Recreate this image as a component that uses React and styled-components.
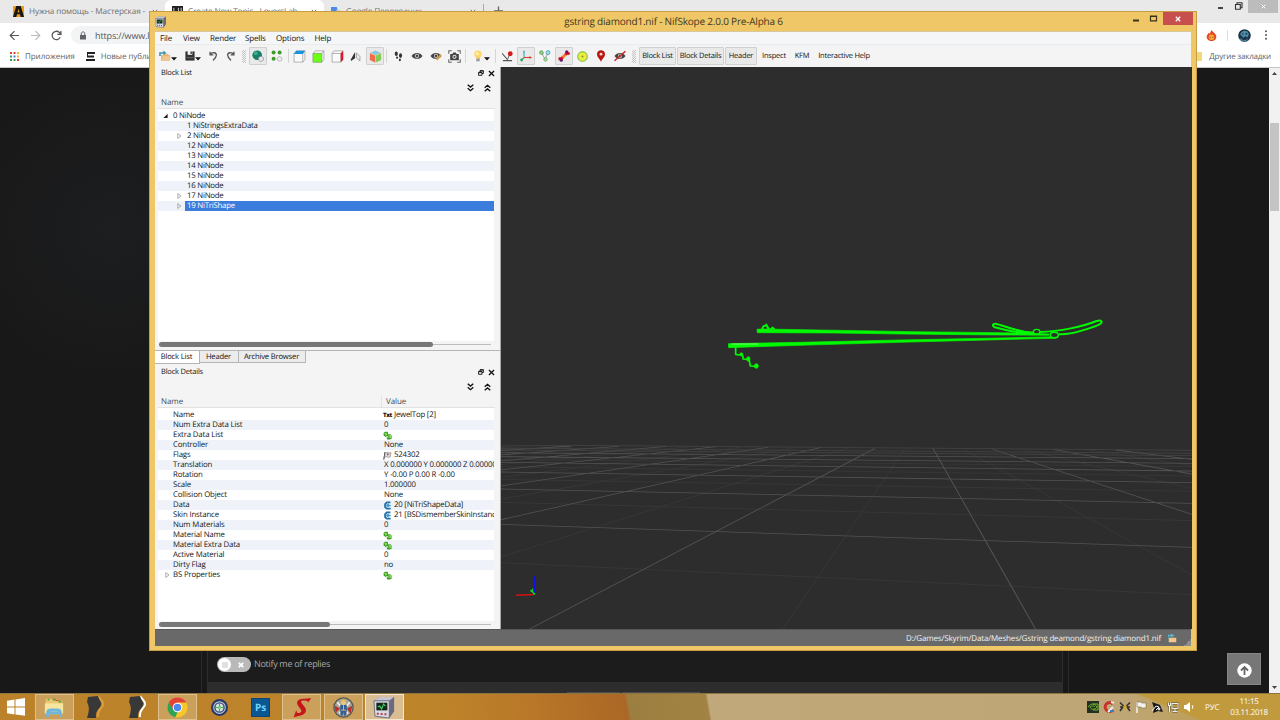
import styled, { createGlobalStyle, css } from 'styled-components';

const GlobalStyle = createGlobalStyle`
  * { box-sizing: border-box; }
  body {
    margin: 0;
    overflow: hidden;
    font-family: "Open Sans", "Noto Sans", sans-serif;
    text-rendering: geometricPrecision;
  }
  svg { display: block; flex: none; }
`;

const Screen = styled.div`
  position: relative;
  width: 1280px;
  height: 720px;
  display: flex;
  flex-direction: column;
  overflow: hidden;
  background: #181818;
`;

/* ---------- browser behind the window ---------- */

const TabStrip = styled.div`
  height: 23px;
  flex: none;
  display: flex;
  background: #e9e9e9;
`;

const BrowserTab = styled.div`
  width: ${({ $w }) => $w}px;
  height: 23px;
  display: flex;
  align-items: center;
  gap: 5px;
  padding: 0 7px 0 ${({ $pad }) => $pad || 7}px;
  font-size: 8.2px;
  letter-spacing: -0.12px;
  white-space: nowrap;
  color: #6b6d70;
  border-radius: 6px 6px 0 0;
  background: ${({ $active }) => ($active ? '#fff' : 'transparent')};
`;

const TabText = styled.span`
  flex: 1;
`;

const BrowserControls = styled.div`
  margin-left: auto;
  display: flex;
  height: 13px;
  align-items: center;
`;

const BrowserClose = styled.div`
  width: 30px;
  height: 13px;
  margin: 0 2px 0 4px;
  display: flex;
  align-items: center;
  justify-content: center;
  background: #bcbcbc;
`;

const AddressRow = styled.div`
  height: 24px;
  flex: none;
  display: flex;
  align-items: center;
  padding: 0 9px;
  background: #fff;
`;

const Nav = styled.div`
  display: flex;
  gap: 10px;
  margin-right: 9px;
`;

const AddressBar = styled.div`
  width: 1104px;
  height: 18px;
  border-radius: 9px;
  display: flex;
  align-items: center;
  gap: 8px;
  padding-left: 8px;
  background: #f1f3f4;
  color: #55585c;
  font-size: 9px;
  letter-spacing: -0.14px;
`;

const AddressTools = styled.div`
  margin-left: auto;
  display: flex;
  align-items: center;
  gap: 10px;
  background: #fff;
`;

const Divider = styled.div`
  width: 1px;
  height: 11px;
  background: #ddd;
`;

const Bookmarks = styled.div`
  height: 21px;
  flex: none;
  display: flex;
  align-items: center;
  padding: 0 9px 2px 10px;
  font-size: 8px;
  letter-spacing: -0.05px;
  color: #5f6368;
  background: #fff;
  border-bottom: 1px solid #c5c5c5;
  white-space: nowrap;
`;

const Bookmark = styled.div`
  display: flex;
  align-items: center;
  gap: 6px;
  margin-right: 11px;
  &:last-child {
    margin: 0 0 0 auto;
    letter-spacing: -0.2px;
  }
`;

const Page = styled.div`
  height: 625px;
  flex: none;
  display: flex;
  background: radial-gradient(circle at 110px 160px, #1d1e20, #181818 150px);
`;

const PageSide = styled.div`
  width: ${({ $w }) => $w}px;
  border-right: 1px solid #2a2a2a;
`;

const PageColumn = styled.div`
  width: 856px;
  margin-left: 5px;
  display: flex;
  flex-direction: column;
  justify-content: flex-end;
  background: #1c1c1c;
  border: solid #2d2d2d;
  border-width: 0 1px;
`;

const ReplyRow = styled.div`
  display: flex;
  align-items: center;
  gap: 3px;
  height: 34px;
  padding: 0 0 4px 9px;
  font-size: 9px;
  letter-spacing: -0.31px;
  color: #a9a9a9;
`;

const Toggle = styled.div`
  width: 34px;
  height: 15px;
  margin-top: 3px;
  padding: 1px;
  border-radius: 8px;
  display: flex;
  align-items: center;
  gap: 7px;
  background: #b9b9b9;
`;

const Knob = styled.div`
  width: 13px;
  height: 13px;
  border-radius: 50%;
  display: flex;
  align-items: center;
  justify-content: center;
  background: #fff;
`;

const KnobMark = styled.div`
  width: 6px;
  height: 6px;
  background: #e0e0e0;
`;

const FormFooter = styled.div`
  height: 11px;
  display: flex;
  align-items: flex-end;
  gap: 2px;
  padding-left: 359px;
  background: #2d2d2d;
`;

const FooterEdge = styled.div`
  width: ${({ $w }) => $w}px;
  height: 1px;
  background: #4c4c4c;
`;

const PageRight = styled.div`
  flex: 1;
  margin-left: 5px;
  border-left: 1px solid #2a2a2a;
  display: flex;
  align-items: flex-end;
  justify-content: flex-end;
  padding: 0 8px 8px 0;
`;

const UpButton = styled.div`
  width: 34px;
  height: 32px;
  display: flex;
  align-items: center;
  justify-content: center;
  padding-top: 3px;
  background: #777;
  border: 1px solid #858585;
`;

const PageScroll = styled.div`
  width: 11px;
  display: flex;
  flex-direction: column;
  align-items: center;
  padding: 4px 1px;
  background: #f1f1f1;
`;

const PageThumb = styled.div`
  width: 9px;
  height: 88px;
  margin: 48px 0 auto;
  background: #c4c4c4;
`;

/* ---------- NifSkope window ---------- */

const Win = styled.div`
  position: absolute;
  left: 149px;
  top: 11px;
  width: 1048px;
  height: 640px;
  padding: 0 4px 4px 5px;
  border: 1px solid #c79d44;
  background: #f0c767;
  display: flex;
  flex-direction: column;
`;

const TitleBar = styled.div`
  height: 19px;
  flex: none;
  display: flex;
  align-items: center;
`;

const Title = styled.div`
  flex: 1;
  text-align: center;
  padding: 0 0 1px 48px;
  font-size: 10px;
  letter-spacing: -0.2px;
  color: #3f3822;
`;

const WinControls = styled.div`
  height: 19px;
  display: flex;
  gap: 5px;
  margin-right: -1px;
`;

const CloseButton = styled.div`
  width: 30px;
  height: 13px;
  display: flex;
  align-items: center;
  justify-content: center;
  background: #c74f4e;
`;

const MenuBar = styled.div`
  height: 14px;
  flex: none;
  display: flex;
  align-items: center;
  margin-right: 1px;
  padding-left: 5px;
  border-top: 1px solid #d9c99a;
  border-bottom: 1px solid #ebebeb;
  background: #f5f6f7;
  font-size: 8px;
  letter-spacing: -0.15px;
  color: #111;
`;

const MenuItem = styled.div`
  width: ${({ $w }) => $w}px;
`;

const ToolBar = styled.div`
  height: 22px;
  flex: none;
  display: flex;
  align-items: center;
  margin-right: 1px;
  padding-left: 3px;
  background: #f4f4f4;
`;

const pressed = css`
  background: #e9e9e9;
  border: 1px solid #d0d0d0;
  border-radius: 1px;
`;

const Tool = styled.div`
  width: ${({ $w }) => $w}px;
  height: 18px;
  flex: none;
  margin-left: ${({ $ml }) => $ml || 0}px;
  padding-left: ${({ $pad }) => $pad || 0}px;
  display: flex;
  align-items: center;
  justify-content: ${({ $pad }) => ($pad ? 'flex-start' : 'center')};
  font-size: 7.5px;
  letter-spacing: -0.22px;
  white-space: nowrap;
  color: #111;
  ${({ $on }) => $on && pressed}
`;

const Separator = styled.div`
  width: 1px;
  height: 14px;
  background: #d5d5d5;
`;

const Grip = styled.div`
  width: 4px;
  height: 13px;
  background: repeating-conic-gradient(#c4c4c4 0 25%, #f4f4f4 0 50%) 0 0 / 2px 2px;
`;

const Work = styled.div`
  height: 562px;
  flex: none;
  display: flex;
  margin-right: 1px;
`;

const Left = styled.div`
  width: 346px;
  flex: none;
  display: flex;
  flex-direction: column;
  background: #f4f4f4;
  border-right: 1px solid #a8a8a8;
`;

const Dock = styled.section`
  height: ${({ $h }) => $h}px;
  flex: none;
  display: flex;
  flex-direction: column;
  padding: 0 5px 0 3px;
`;

const DockTitle = styled.div`
  height: 12px;
  display: flex;
  align-items: center;
  gap: 4px;
  padding-left: 3px;
  font-size: 7.5px;
  letter-spacing: -0.2px;
  color: #111;
`;

const DockName = styled.span`
  flex: 1;
`;

const DockTools = styled.div`
  height: 18px;
  display: flex;
  align-items: center;
  justify-content: flex-end;
  gap: 10px;
  padding-right: 4px;
`;

const TreeHead = styled.div`
  height: 12px;
  display: flex;
  align-items: center;
  padding-left: 3px;
  font-size: 8px;
  letter-spacing: -0.08px;
  color: #4a4a4a;
  border-bottom: 1px solid #e2e2e2;
`;

const HeadCell = styled.div`
  width: ${({ $w }) => $w || 100}px;
  height: 12px;
  line-height: 12px;
  & + & {
    padding-left: 4px;
    border-left: 1px solid #e2e2e2;
  }
`;

const Tree = styled.div`
  flex: 1;
  display: flex;
  flex-direction: column;
  margin-right: 1px;
  padding-top: 2px;
  background: #fff;
`;

const TreeRow = styled.div`
  height: 10px;
  flex: none;
  display: flex;
  font-size: 7.8px;
  line-height: 10px;
  letter-spacing: -0.15px;
  white-space: nowrap;
  color: #141414;
  &:nth-child(even) { background: #eff3f9; }
`;

const Expander = styled.div`
  width: ${({ $w }) => $w}px;
  display: flex;
  align-items: center;
  justify-content: flex-end;
  padding-right: 3px;
`;

const NodeName = styled.div`
  flex: 1;
  padding-left: 2px;
  letter-spacing: -0.22px;
  ${({ $selected }) => $selected && css`
    background: #3b7ddd;
    color: #fff;
  `}
`;

const FieldName = styled.div`
  width: 209px;
`;

const FieldValue = styled.div`
  flex: 1;
  min-width: 0;
  overflow: hidden;
  display: flex;
  align-items: center;
  gap: 2px;
  padding-left: ${({ $icon }) => ($icon ? 1 : 2)}px;
  letter-spacing: -0.2px;
`;

const TxtMark = styled.span`
  width: 9px;
  font-size: 6px;
  font-weight: 800;
  letter-spacing: -0.4px;
`;

const HScroll = styled.div`
  height: 6px;
  display: flex;
  align-items: center;
  margin: 0 4px ${({ $mb }) => $mb}px 1px;
`;

const HThumb = styled.div`
  width: ${({ $w }) => $w}px;
  height: 5px;
  border-radius: 3px;
  background: #777;
`;

const HTrack = styled.div`
  flex: 1;
  height: 1px;
  background: #bdbdbd;
`;

const Tabs = styled.div`
  height: 16px;
  flex: none;
  display: flex;
  border-top: 1px solid #b5b5b5;
`;

const DockTab = styled.div`
  width: ${({ $w }) => $w}px;
  height: ${({ $active }) => ($active ? 13 : 12)}px;
  display: flex;
  align-items: center;
  justify-content: center;
  padding-right: 1px;
  font-size: 7.6px;
  letter-spacing: -0.16px;
  color: #111;
  background: ${({ $active }) => ($active ? '#fff' : '#ececec')};
  border: solid #b5b5b5;
  border-width: 0 1px 1px 0;
`;

const Viewport = styled.div`
  flex: 1;
  background: #2d2d2d;
`;

const StatusBar = styled.div`
  flex: 1;
  display: flex;
  align-items: center;
  justify-content: flex-end;
  gap: 7px;
  margin-right: 1px;
  background: #696969;
  border-top: 1px solid #585858;
  font-size: 8px;
  letter-spacing: -0.16px;
  color: #f1f1f1;
`;

const ResizeGrip = styled.div`
  align-self: flex-end;
  width: 7px;
  height: 7px;
  background: linear-gradient(135deg, transparent 50%, #8f8f8f 50%);
`;

/* ---------- taskbar ---------- */

const TaskBar = styled.div`
  height: 27px;
  flex: none;
  display: flex;
  border-top: 1px solid #8a7444;
  background:
    linear-gradient(22deg, transparent 28px, #c09a3c 30px) right / 155px 27px no-repeat,
    linear-gradient(80deg, #bb822a 0, #bd842a 430px, #b97829 520px, #ab6726 619px, #9c7f40 622px, #a18343 699px, #c0a87a 701px, #bea676 1110px, #bd9432 1280px);
`;

const StartButton = styled.div`
  width: 34.6px;
  display: flex;
  align-items: center;
  justify-content: center;
  padding-right: 2px;
`;

const TaskItem = styled.div`
  width: 39px;
  height: 26px;
  margin-right: 2.3px;
  display: flex;
  align-items: center;
  justify-content: center;
  border: 1px solid transparent;
  ${({ $open }) => $open && css`
    background: rgba(222, 200, 160, 0.42);
    border-color: rgba(235, 215, 175, 0.6);
  `}
  ${({ $current }) => $current && css`
    background: rgba(235, 225, 210, 0.62);
    border-color: #f4e8d0;
  `}
`;

const Tray = styled.div`
  margin-left: auto;
  display: flex;
  align-items: center;
  gap: 4px;
  padding-right: 10px;
  color: #fff;
`;

const Lang = styled.div`
  width: 25px;
  padding-left: 6px;
  font-size: 8px;
  letter-spacing: -0.1px;
`;

const Clock = styled.div`
  width: 42px;
  font-size: 8px;
  letter-spacing: -0.32px;
  line-height: 11px;
  text-align: center;
`;

/* ---------- drawings ---------- */

const Svg = ({ w = 12, h, box = '0 0 12 12', children }) => (
  <svg width={w} height={h || w} viewBox={box} fill="none">{children}</svg>
);

const Cross = ({ size = 6, color = '#222', width = 1.5 }) => (
  <Svg w={size} box="0 0 6 6"><path d="M.8.8 5.2 5.2M5.2.8.8 5.2" stroke={color} strokeWidth={width} /></Svg>
);

const FolderIcon = () => (
  <Svg>
    <path d="M2 10.8V5h3l1-1.3h3.3V5H11v5.8z" fill="#e9b679" />
    <path d="M2.8 10.8 4 6.2h7.6l-.8 4.6z" fill="#f0c793" />
    <path d="M1 6V3h4" stroke="#3d94aa" strokeWidth="1.6" />
    <path d="M4.4.6 7.4 3 4.4 5.2z" fill="#3d94aa" />
  </Svg>
);

const SaveIcon = () => (
  <Svg w={10}>
    <path d="M.5.5h11v11H.5z" fill="#333" />
    <path d="M3.2 0h5.6v4.6H3.2z" fill="#f4f4f4" />
    <path d="M6.6.6h1.6v3H6.6z" fill="#333" />
    <path d="M2 8h8" stroke="#777" />
  </Svg>
);

const DropArrow = () => (
  <Svg w={6} h={10} box="0 0 6 10"><path d="M0 6.2h6L3 9.4z" fill="#111" /></Svg>
);

const UndoIcon = ({ flip }) => (
  <Svg w={10}>
    <g transform={flip ? 'translate(12 0) scale(-1 1)' : undefined}>
      <path d="M2.5 .8V4.6h4M2.8 4.2C5 1 10.2 1.4 10 5.2 9.8 8.2 7.5 9.6 5.8 11.2" stroke="#555" strokeWidth="1.6" />
    </g>
  </Svg>
);

const GlobeIcon = () => (
  <Svg>
    <circle cx="5.2" cy="5.2" r="4.8" fill="#168069" />
    <circle cx="3.8" cy="3.4" r="1.8" fill="#46ad95" />
    <path d="M9 6.2 11.4 7.5v2.8L9 11.6 6.6 10.3V7.5z" fill="#e8e8e8" stroke="#858585" strokeWidth=".6" />
  </Svg>
);

const DotsIcon = () => (
  <Svg>
    <g fill="#3f9a2c"><circle cx="2.6" cy="2.6" r="2" /><circle cx="8.6" cy="2.6" r="2" /><circle cx="2.6" cy="8.8" r="2" /></g>
    <path d="M8.6 6.5 10.8 7.7v2.4L8.6 11.3 6.4 10.1V7.7z" fill="#eee" stroke="#999" strokeWidth=".6" />
  </Svg>
);

const CubeIcon = ({ face }) => (
  <Svg w={13}>
    <path d="M1 3.2h8v8H1zM1 3.2 3 .8h8v8l-2 2.4M9 3.2 11 .8" fill="#fafafa" stroke="#8c8c8c" strokeWidth=".6" />
    {face === 'top' && <path d="M1 3.6 3 .8h8L9 3.6z" fill="#1592e0" />}
    {face === 'front' && <path d="M1 3.2h8v8H1z" fill="#6bff14" stroke="#70a84e" strokeWidth=".5" />}
    {face === 'side' && <path d="M9 3.2 11.2.8v8.1L9 11.2z" fill="#e3152d" />}
  </Svg>
);

const BookIcon = () => (
  <Svg w={11}>
    <path d="M1 9 5.5 1v7L1 11z" fill="#333" />
    <path d="M7 2 10.8 6v5L7 7.5z" fill="#eee" stroke="#888" strokeWidth=".8" />
  </Svg>
);

const ColorCube = () => (
  <Svg w={13}>
    <path d="M6 .4 11.2 2.8 6 5 .8 2.8z" fill="#84c7e8" />
    <path d="M.8 2.8 6 5v6.8L.8 9.2z" fill="#f06b50" />
    <path d="M11.2 2.8 6 5v6.8l5.2-2.6z" fill="#83cb53" />
    <path d="M.8 2.8 6 5l5.2-2.2M6 5v6.6" stroke="#f6d894" strokeWidth=".6" />
  </Svg>
);

const FeetIcon = () => (
  <Svg w={11}>
    <g fill="#333"><ellipse cx="3.6" cy="3" rx="1.7" ry="2.5" /><ellipse cx="4.4" cy="7.2" rx="1.1" ry="1.3" /><ellipse cx="8.2" cy="5" rx="1.7" ry="2.5" /><ellipse cx="7.5" cy="9.7" rx="1.1" ry="1.5" /></g>
  </Svg>
);

const EyeIcon = ({ pencil, slash }) => (
  <Svg w={12}>
    <path d="M.5 6C3 2 9 2 11.5 6 9 9.8 3 9.8.5 6z" fill="#444" />
    <circle cx="6" cy="5.9" r="2.1" fill="#c7c7c7" /><circle cx="6" cy="5.9" r="1.1" fill="#333" />
    {pencil && <path d="M6.8 10 11 4.6" stroke="#e8a33a" strokeWidth="1.8" />}
    {slash && <path d="M.6 10.8 11.4 1.2" stroke="#d02222" strokeWidth="1.5" />}
  </Svg>
);

const CameraIcon = () => (
  <Svg w={13}>
    <path d="M.7 3.5V.7h2.8M8.5.7h2.8v2.8M11.3 8.5v2.8H8.5M3.5 11.3H.7V8.5" stroke="#666" />
    <path d="M2 3.6h2L4.8 2.4h2.4L8 3.6h2v5.8H2z" fill="#444" />
    <circle cx="6" cy="6.3" r="1.9" fill="#ddd" /><circle cx="6" cy="6.3" r="1" fill="#555" />
  </Svg>
);

const BulbIcon = () => (
  <Svg w={12}>
    <circle cx="6" cy="4.2" r="3.7" fill="#ffd768" /><circle cx="5.3" cy="3.6" r="1.6" fill="#fff0b0" />
    <path d="M4 7h4v1.5H4z" fill="#f5cc5b" /><path d="M4.3 8.5h3.4v2.8H4.3z" fill="#999" />
  </Svg>
);

const PickIcon = () => (
  <Svg w={11}>
    <path d="M0 2.5 6 9.3M1 10.5h10" stroke="#555" strokeWidth="1.2" />
    <path d="M6 9.5 8 4" stroke="#555" />
    <circle cx="9" cy="3" r="2.6" fill="#d7191c" />
  </Svg>
);

const AxesIcon = () => (
  <Svg w={12}>
    <path d="M4 7V1.5" stroke="#35a9ce" strokeWidth="1.1" /><path d="M4 7.5h6.5" stroke="#db3c2d" strokeWidth="1.1" />
    <path d="M4 7.5 1.5 10.3" stroke="#32a95c" strokeWidth="1.3" />
    <path d="M2.8 2.2 4 .2l1.2 2z" fill="#35a9ce" /><path d="M9.5 6 12 7.5 9.5 9z" fill="#db3c2d" /><circle cx="1.6" cy="10" r="1.4" fill="#32a95c" />
  </Svg>
);

const NodesIcon = () => (
  <Svg w={12}>
    <path d="M2.5 3 6 9l3-6M2.5 3l2 1" stroke="#888" strokeWidth=".8" />
    <circle cx="2.4" cy="2.6" r="1.8" fill="#9bd58b" stroke="#4b9a42" strokeWidth=".8" />
    <circle cx="9" cy="2.6" r="2" fill="#a8dcef" stroke="#3b99b9" strokeWidth=".8" />
    <circle cx="6.5" cy="9.4" r="1.7" fill="#b2dfad" stroke="#5ba45a" strokeWidth=".8" />
  </Svg>
);

const BoneIcon = () => (
  <Svg w={12}>
    <path d="M3 9 9 3" stroke="#f27a2a" strokeWidth="2.6" />
    <path d="M3 9 4.6 7.4M7.6 4.4 9 3" stroke="#d31234" strokeWidth="2.8" />
    <g fill="#d31234"><circle cx="2" cy="8.7" r="1.7" /><circle cx="10.2" cy="3.4" r="1.7" /></g>
    <g fill="#6b0f6c"><circle cx="3.3" cy="10.2" r="1.5" /><circle cx="8.7" cy="1.8" r="1.5" /></g>
  </Svg>
);

const TargetIcon = () => (
  <Svg w={11}>
    <circle cx="6" cy="6" r="5.2" fill="#f0ec3e" stroke="#8fce4c" strokeWidth="1.4" /><circle cx="6" cy="6" r="1.1" fill="#7b9b27" />
  </Svg>
);

const PinIcon = () => (
  <Svg w={12}>
    <path d="M6 12C5 8.8 2 7.4 2 4.3 2 1.8 3.8.3 6 .3s4 1.5 4 4C10 7.4 7 8.8 6 12z" fill="#bb1710" /><circle cx="6" cy="4.2" r="1.4" fill="#f2dada" />
  </Svg>
);

const FloatIcon = () => (
  <Svg w={6} box="0 0 6 6"><path d="M2 2V.7h3.4v2.8H4M.6 2.4H4v2.9H.6zM.6 2.7H4M2 1h3.4" stroke="#111" strokeWidth=".9" /></Svg>
);

const Chevrons = ({ up }) => (
  <Svg w={7} h={8} box="0 0 7 8">
    <g transform={up ? 'translate(0 8) scale(1 -1)' : undefined} stroke="#111" strokeWidth="1.4">
      <path d="M.7.8 3.5 3 6.3.8M.7 4.3 3.5 6.7 6.3 4.3" />
    </g>
  </Svg>
);

const ArrowMark = ({ open }) => (
  <Svg w={5} h={6} box="0 0 5 6">
    {open ? <path d="M4.6.8v4.1H.4z" fill="#222" /> : <path d="M.8.6 4 3 .8 5.4z" stroke="#999" strokeWidth=".8" />}
  </Svg>
);

const ArrayIcon = () => (
  <Svg w={9} h={9} box="0 0 9 9">
    <path d="M.6 2 2 .8h2.6l.4 1V5H3.4v1.4L.6 4.6z" fill="#3f9e24" />
    <path d="M4.6 3.2h2.8l1.2 1.2v3.4L6.8 8.4H4.2l-.6-2h1z" fill="#3f9e24" />
    <path d="M1.4 2.4h2.2v1.8M5.6 4.2h1.8V7" stroke="#8be463" strokeWidth="1" />
    <path d="M2.2 3.4h.8v.8h-.8zM5.6 5.6h.9v1h-.9z" fill="#fff" />
  </Svg>
);

const LinkIcon = () => (
  <Svg w={9} box="0 0 8 8">
    <path d="M6.6 1.2H3.4L1.9 2.8v2.6l1.5 1.4H6.8" stroke="#2372a7" strokeWidth="1.7" />
    <path d="M3.4 4h3.4M5 2.5 3.4 4 5 5.3" stroke="#3f98d2" strokeWidth="1.2" />
  </Svg>
);

const FlagIcon = () => (
  <Svg w={9} h={9} box="0 0 9 8">
    <path d="M.8 8 2 .6" stroke="#222" /><path d="M2 1.4 4.5.8 6 1.5l2-.4-.8 4.4-2 .3-1.4-.6-2.2.5z" fill="#ddd" stroke="#777" strokeWidth=".6" />
    <path d="M4 2h1.5v1.7H4z" fill="#b53a35" />
  </Svg>
);

const AppIcon = ({ size }) => (
  <Svg w={size} box="0 0 24 24">
    <path d="M1 5 7 1h15v15l-5 7-14-1z" fill="#8d8da2" /><path d="M1 5 7 1h15l-5 4z" fill="#c4c4d2" />
    <path d="M1 5h16v18L2 21z" fill="#dadae2" stroke="#5d5d6c" strokeWidth=".8" />
    <path d="M17 5 22 1v15l-5 7z" fill="#6a6a80" /><path d="M3.5 7H15v8H3.5z" fill="#132816" />
    <path d="m5 11.5 2-1 2 3 2-5 2 2" stroke="#48c76a" strokeWidth="1.2" /><path d="M4 18.5h2M8 18.8h2M12 19h2" stroke="#b53b47" strokeWidth="2" />
  </Svg>
);

const SceneDrawing = () => (
  <svg width="691" height="562" viewBox="501 67 691 562" fill="none">
    {/* floor grid, major lines over minor ones */}
    <g transform="translate(500 420) scale(.4464 .3333)">
      <path
        stroke="#383838"
        strokeWidth="2.2"
        d="M0 428 1550 524M0 247 1550 302M0 178 1550 214M0 140 1550 168M0 118 1550 140M905 90 633 628M1038 88 1550 465M780 84 0 412M660 83 0 238M1170 88 1550 205M1310 88 1550 137M540 82 0 172M428 80 0 134"
      />
      <path
        stroke="#535353"
        strokeWidth="2.4"
        d="M0 313 1550 382M0 207 1550 250M0 156 1550 188M0 127 1550 153M0 110 1550 130M0 98 1550 116M840 85 65 628M970 85 1200 628M720 82 0 300M1102 87 1550 283M600 82 0 198M1238 88 1550 162M485 80 0 150M1380 90 1550 118M373 79 0 123M265 79 0 105M160 78 0 92"
      />
      <path stroke="#454545" strokeWidth="2" d="M0 90 1550 107M0 84 1550 100M0 78 160 76 1550 91M0 87 160 84" />
    </g>
    {/* selected mesh, seen from the side */}
    <g transform="translate(700 300) scale(.3333)" stroke="#00fa00" strokeWidth="6" strokeLinejoin="round">
      <path d="M171 88 190 87 640 95 980 99 1048 102 1046 106 900 105 600 102 400 99 172 98z" fill="#00fa00" strokeWidth="2" />
      <path d="M85 131 300 127 600 120 900 114 1068 110 1075 112 1066 115 900 119 600 127 300 136 86 143z" fill="#00fa00" strokeWidth="2" />
      <path d="M95 132h80" stroke="#78ff70" strokeWidth="3" />
      <path d="M186 88 190 79 198 76l5 5 3 7M212 88l6-5 5 5M199 76v-5" strokeWidth="6" />
      <path d="M107 142v21l9 2 7-2 6 6v8l15 1 4 4 3 16 16 1" strokeWidth="5" />
      <ellipse cx="124" cy="163" rx="4" ry="5" fill="#00fa00" strokeWidth="2" />
      <ellipse cx="145" cy="177" rx="5" ry="7" fill="#00fa00" strokeWidth="2" />
      <ellipse cx="169" cy="198" rx="6" ry="7" fill="#00fa00" strokeWidth="2" />
      <path d="M1002 99C960 100 915 91 885 82c-10-4-7-11 1-11 9 0 30 12 88 24l28 3" />
      <path d="M1020 96C1080 95 1150 79 1190 63c9-2 16-2 15 4-1 8-30 15-50 22-30 10-50 15-78 14" />
      <ellipse cx="1010" cy="95" rx="10" ry="7" fill="#2d2d2d" strokeWidth="4" />
      <ellipse cx="1063" cy="105" rx="12" ry="8" fill="#2d2d2d" strokeWidth="4.5" />
    </g>
    {/* axis gizmo */}
    <path d="M534.7 576.5v17" stroke="#1010e8" strokeWidth="1.8" />
    <path d="M516 595.2 534 594.5" stroke="#d31212" strokeWidth="1.6" />
    <path d="M535 594.5 530.8 590" stroke="#14d818" strokeWidth="1.5" />
    <path d="M530 591h2.6v-2.6" stroke="#14d818" />
  </svg>
);

const FigureIcon = ({ edge }) => (
  <Svg w={24} box="0 0 24 24">
    <path d="M15 1c3 5 6 5 5 9-1 3-6 5-5 12" stroke={edge} strokeWidth="2" />
    <path d="M5 2 15 1c2 6 4 6 3 9-1 4-6 5-5 13H4C7 14 6 11 4 7z" fill="#383839" />
  </Svg>
);

const ChromeIcon = () => (
  <Svg w={21} box="0 0 24 24">
    <circle cx="12" cy="12" r="11.5" fill="#f8c628" />
    <path d="M2 6.3A11.5 11.5 0 0 1 22 6.3H12L7 15z" fill="#df4437" />
    <path d="M2 6.3 7.5 15 12 17.5 9.5 23.2A11.5 11.5 0 0 1 2 6.3z" fill="#30a256" />
    <circle cx="12" cy="12" r="5.5" fill="#fff" /><circle cx="12" cy="12" r="4.3" fill="#4b89ed" />
  </Svg>
);

const ExplorerIcon = () => (
  <Svg w={22} box="0 0 24 24">
    <path d="M3 3h6l2 2h10v15H3z" fill="#e9ca72" /><path d="M2 8h20v11H2z" fill="#f7e49d" />
    <path d="M5 4h2M11 4h3M17 6h3" stroke="#5ea33a" strokeWidth="2" /><path d="M14 5h3" stroke="#d04533" />
    <path d="M5 23v-5c0-3 2-3 4-3h6c3 0 4 1 4 3v5M5 18.5h14" stroke="#6eb7dc" strokeWidth="3" />
  </Svg>
);

const CompassIcon = () => (
  <Svg w={17} box="0 0 24 24">
    <circle cx="12" cy="12" r="10.5" fill="#c2cbd4" stroke="#28366d" strokeWidth="3" />
    <circle cx="12" cy="12" r="6.5" fill="#dce4de" stroke="#394c81" strokeWidth="2" />
    <path d="M12 5v14M5 12h14" stroke="#44a35a" strokeWidth="1.6" /><circle cx="12" cy="12" r="2.5" fill="#72d281" />
  </Svg>
);

const PsTile = styled.div`
  width: 19px;
  height: 19px;
  display: flex;
  align-items: center;
  justify-content: center;
  border: 1px solid #0e4573;
  background: #0b5794;
  color: #6ed5fa;
  font-size: 10px;
  font-weight: 700;
`;

const SwordIcon = () => (
  <Svg w={21} box="0 0 24 24">
    <path d="M23 1 20 6c-1-2-4-2-6-2-3 0-3 2-1 4l3 4c3 5-1 8-5 9l-8 2 3-8 1 3c1 1 5 0 5-2s-6-7-5-10c1-4 6-4 9-4z" fill="#c5171b" />
  </Svg>
);

const BadgeIcon = () => (
  <Svg w={21} box="0 0 24 24">
    <circle cx="12" cy="12" r="11" fill="#a8a493" stroke="#555a59" strokeWidth="1.5" />
    <path d="m2 10 6 3-5 5zM22 10l-6 3 4 6z" fill="#b92d2a" />
    <path d="M5 6 8 10M19 6l-3 4M7 19l2-3M17 19l-2-3" stroke="#eee" strokeWidth="2" />
    <path d="M8.5 9h7l.5 6-1.5 6h-2L12 17l-1 4H9l-1-6z" fill="#335d96" />
    <circle cx="12" cy="6" r="3" fill="#eac482" /><path d="M9.4 5c0-3 5-3 5.2 0z" fill="#e5bd3f" />
    <path d="M12 9v6M9 15h6" stroke="#e8c453" />
  </Svg>
);

/* ---------- data ---------- */

const MENU = [['File', 23], ['View', 27], ['Render', 35], ['Spells', 31], ['Options', 38.5], ['Help', 30]];

const BLOCKS = [
  { name: '1 NiStringsExtraData' },
  { name: '2 NiNode', child: true },
  { name: '12 NiNode' },
  { name: '13 NiNode' },
  { name: '14 NiNode' },
  { name: '15 NiNode' },
  { name: '16 NiNode' },
  { name: '17 NiNode', child: true },
  { name: '19 NiTriShape', child: true, selected: true },
];

const DETAILS = [
  ['Name', 'JewelTop [2]', <TxtMark>Txt</TxtMark>],
  ['Num Extra Data List', '0'],
  ['Extra Data List', '', <ArrayIcon />],
  ['Controller', 'None'],
  ['Flags', '524302', <FlagIcon />],
  ['Translation', 'X 0.000000 Y 0.000000 Z 0.000000'],
  ['Rotation', 'Y -0.00 P 0.00 R -0.00'],
  ['Scale', '1.000000'],
  ['Collision Object', 'None'],
  ['Data', '20 [NiTriShapeData]', <LinkIcon />],
  ['Skin Instance', '21 [BSDismemberSkinInstance]', <LinkIcon />],
  ['Num Materials', '0'],
  ['Material Name', '', <ArrayIcon />],
  ['Material Extra Data', '', <ArrayIcon />],
  ['Active Material', '0'],
  ['Dirty Flag', 'no'],
  ['BS Properties', '', <ArrayIcon />],
];

/* ---------- parts ---------- */

const Browser = () => (
  <>
    <TabStrip>
      <BrowserTab $w={165} $pad={13}>
        <Svg w={11}><path d="M0 0h12v12H0z" fill="#ee9d18" /><path d="M3.5 0h5L12 12H8.4L6 3 3.6 12H0z" fill="#171717" /><path d="M3 7h6v2H3z" fill="#171717" /></Svg>
        <TabText>Нужна помощь - Мастерская -</TabText>
        <Cross color="#777" width={1} />
      </BrowserTab>
      <BrowserTab $w={159} $active>
        <Svg w={11}><path d="M0 0h12v12H0z" fill="#222" /><path d="M2 2v5h3M7 2v5h3V2" stroke="#ddd" /></Svg>
        <TabText>Create New Topic - LoversLab</TabText>
        <Cross color="#777" width={1} />
      </BrowserTab>
      <BrowserTab $w={159}>
        <Svg w={10}><path d="M0 0h7l2 9H0z" fill="#4d8bea" /><path d="M6 4h6v8H7z" fill="#c9ccd0" /></Svg>
        <TabText>Google Переводчик</TabText>
        <Cross color="#777" width={1} />
      </BrowserTab>
      <Svg w={26} h={23} box="0 0 26 23"><path d="M.5 4v15" stroke="#aaa" /><path d="M11 11h9M15.5 6.5v9" stroke="#666" strokeWidth="1.3" /></Svg>
      <BrowserControls>
        <Svg w={27} h={13} box="0 0 27 13"><path d="M1 8h5" stroke="#333" strokeWidth="1.8" /><path d="M18.5 4.5h4.8v4.8h-4.8zM20 4V2.7h5v5h-1.5" stroke="#333" strokeWidth="1.1" /></Svg>
        <BrowserClose><Cross size={5} color="#fff" width={1.2} /></BrowserClose>
      </BrowserControls>
    </TabStrip>
    <AddressRow>
      <Nav>
        <Svg w={11}><path d="M11 6H1.5M6 1.3 1.3 6 6 10.7" stroke="#555" strokeWidth="1.3" /></Svg>
        <Svg w={11}><path d="M1 6h9.5M6 1.3 10.7 6 6 10.7" stroke="#bbb" strokeWidth="1.3" /></Svg>
        <Svg w={11}><path d="M10 8A4.6 4.6 0 1 1 9 2.6L10.5 4M10.8 1v3.7H7" stroke="#555" strokeWidth="1.4" /></Svg>
      </Nav>
      <AddressBar>
        <Svg w={8} h={9} box="0 0 8 9"><path d="M1 4h6v4.5H1z" fill="#5f6368" /><path d="M2.3 4V2.4c0-2 3.4-2 3.4 0V4" stroke="#5f6368" /></Svg>
        https://www.l
      </AddressBar>
      <AddressTools>
        <Svg w={11}><path d="M6 0c1 2 4 3 5 6 1 3-1 6-5 6S0 9 1 6l2-3 1 1z" fill="#e74824" /><circle cx="6" cy="8" r="3" fill="#f9ab36" /><path d="M4 8h1M7 8h1" stroke="#56301a" /></Svg>
        <Divider />
        <Svg w={13}><circle cx="6" cy="6" r="5.8" fill="#1f3448" /><path d="M2 5c1-4 7-5 8 0L8.5 8 7 6.5 5 8 3.5 6.5z" fill="#4c8cab" /><path d="m2 9 3 2 4-1" stroke="#4c8cab" /><path d="M4 4.5h1M7 4.5h1.5" stroke="#13212b" /></Svg>
        <Svg w={10} h={10} box="0 0 10 10"><g fill="#555"><circle cx="5" cy="1.3" r="1" /><circle cx="5" cy="5" r="1" /><circle cx="5" cy="8.7" r="1" /></g></Svg>
      </AddressTools>
    </AddressRow>
    <Bookmarks>
      <Bookmark>
        <Svg w={9} box="0 0 9 9">
          <path d="M0 1h2M3.5 1h2" stroke="#e24335" strokeWidth="2" /><path d="M7 1h2M7 4.5h2" stroke="#f2b62a" strokeWidth="2" />
          <path d="M0 4.5h2M0 8h2M3.5 8h2" stroke="#35a257" strokeWidth="2" /><path d="M3.5 4.5h2" stroke="#427fda" strokeWidth="2" /><path d="M7 8h2" stroke="#e24335" strokeWidth="2" />
        </Svg>
        Приложения
      </Bookmark>
      <Bookmark>
        <Svg w={9} box="0 0 9 9"><path d="M1 1h8M1 4.5h7M0 8h9" stroke="#222" strokeWidth="1.8" /><path d="M1.5 1v3.5" stroke="#222" /></Svg>
        Новые публикации
      </Bookmark>
      <Bookmark>
        <Svg w={9} box="0 0 9 9"><path d="M0 0h8v9H0z" fill="#f4d778" /></Svg>
        Другие закладки
      </Bookmark>
    </Bookmarks>
    <Page>
      <PageSide $w={202} />
      <PageColumn>
        <ReplyRow>
          <Toggle><Knob><KnobMark /></Knob><Cross size={6} color="#fff" width={1.8} /></Toggle>
          Notify me of replies
        </ReplyRow>
        <FormFooter><FooterEdge $w={53} /><FooterEdge $w={78} /></FormFooter>
      </PageColumn>
      <PageRight>
        <UpButton>
          <Svg w={15} box="0 0 15 15"><circle cx="7.5" cy="7.5" r="7.2" fill="#fff" /><path d="M7.5 12V4M4 7.5 7.5 4 11 7.5" stroke="#666" strokeWidth="1.8" /></Svg>
        </UpButton>
      </PageRight>
      <PageScroll>
        <Svg w={5} h={3} box="0 0 5 3"><path d="M0 3 2.5 0 5 3z" fill="#444" /></Svg>
        <PageThumb />
        <Svg w={5} h={3} box="0 0 5 3"><path d="M0 0 2.5 3 5 0z" fill="#444" /></Svg>
      </PageScroll>
    </Page>
  </>
);

const Tools = () => (
  <ToolBar>
    <Tool $w={22} $pad={1}><FolderIcon /><DropArrow /></Tool>
    <Tool $w={24} $pad={5}><SaveIcon /><DropArrow /></Tool>
    <Tool $w={18}><UndoIcon /></Tool>
    <Tool $w={17}><UndoIcon flip /></Tool>
    <Tool $w={9}><Grip /></Tool>
    <Tool $w={18} $ml={1} $on><GlobeIcon /></Tool>
    <Tool $w={20}><DotsIcon /></Tool>
    <Tool $w={3}><Separator /></Tool>
    <Tool $w={19}><CubeIcon face="top" /></Tool>
    <Tool $w={19}><CubeIcon face="front" /></Tool>
    <Tool $w={18}><CubeIcon face="side" /></Tool>
    <Tool $w={19}><BookIcon /></Tool>
    <Tool $w={18} $ml={1} $on><ColorCube /></Tool>
    <Tool $w={5}><Separator /></Tool>
    <Tool $w={18}><FeetIcon /></Tool>
    <Tool $w={19}><EyeIcon /></Tool>
    <Tool $w={19}><EyeIcon pencil /></Tool>
    <Tool $w={18}><CameraIcon /></Tool>
    <Tool $w={5}><Separator /></Tool>
    <Tool $w={24} $pad={4}><BulbIcon /><DropArrow /></Tool>
    <Tool $w={7}><Separator /></Tool>
    <Tool $w={17}><PickIcon /></Tool>
    <Tool $w={18} $ml={1} $on><AxesIcon /></Tool>
    <Tool $w={19}><NodesIcon /></Tool>
    <Tool $w={18} $ml={1} $on><BoneIcon /></Tool>
    <Tool $w={18}><TargetIcon /></Tool>
    <Tool $w={19}><PinIcon /></Tool>
    <Tool $w={19}><EyeIcon slash /></Tool>
    <Tool $w={9}><Grip /></Tool>
    <Tool $w={37} $ml={1} $on>Block List</Tool>
    <Tool $w={47} $ml={1} $on>Block Details</Tool>
    <Tool $w={32} $ml={1} $on>Header</Tool>
    <Tool $w={34}>Inspect</Tool>
    <Tool $w={22}>KFM</Tool>
    <Tool $w={62}>Interactive Help</Tool>
  </ToolBar>
);

const DockHeader = ({ name }) => (
  <>
    <DockTitle><DockName>{name}</DockName><FloatIcon /><Cross size={7} color="#111" width={1.1} /></DockTitle>
    <DockTools><Chevrons /><Chevrons up /></DockTools>
  </>
);

const BlockList = () => (
  <Dock $h={283}>
    <DockHeader name="Block List" />
    <TreeHead><HeadCell>Name</HeadCell></TreeHead>
    <Tree>
      <TreeRow>
        <Expander $w={13}><ArrowMark open /></Expander>
        <NodeName>0 NiNode</NodeName>
      </TreeRow>
      {BLOCKS.map(({ name, child, selected }) => (
        <TreeRow key={name}>
          <Expander $w={27}>{child && <ArrowMark />}</Expander>
          <NodeName $selected={selected}>{name}</NodeName>
        </TreeRow>
      ))}
    </Tree>
    <HScroll $mb={3}><HThumb $w={274} /><HTrack /></HScroll>
  </Dock>
);

const BlockDetails = () => (
  <Dock $h={263}>
    <DockHeader name="Block Details" />
    <TreeHead><HeadCell $w={220}>Name</HeadCell><HeadCell>Value</HeadCell></TreeHead>
    <Tree>
      {DETAILS.map(([name, value, icon]) => (
        <TreeRow key={name}>
          <Expander $w={15}>{name === 'BS Properties' && <ArrowMark />}</Expander>
          <FieldName>{name}</FieldName>
          <FieldValue $icon={!!icon}>{icon}{value}</FieldValue>
        </TreeRow>
      ))}
    </Tree>
    <HScroll $mb={2}><HThumb $w={171} /><HTrack /></HScroll>
  </Dock>
);

const NifWindow = () => (
  <Win>
    <TitleBar>
      <AppIcon size={12} />
      <Title>gstring diamond1.nif - NifSkope 2.0.0 Pre-Alpha 6</Title>
      <WinControls>
        <Svg w={26} h={13} box="0 0 26 13"><path d="M1 8.5h6" stroke="#3b331d" strokeWidth="2" /><path d="M18.5 4h6v4.8h-6zM18 4.3h7" stroke="#3b331d" strokeWidth="1.2" /></Svg>
        <CloseButton><Cross size={6} color="#fff" width={1.3} /></CloseButton>
      </WinControls>
    </TitleBar>
    <MenuBar>{MENU.map(([label, w]) => <MenuItem key={label} $w={w}>{label}</MenuItem>)}</MenuBar>
    <Tools />
    <Work>
      <Left>
        <BlockList />
        <Tabs>
          <DockTab $w={45} $active>Block List</DockTab>
          <DockTab $w={39}>Header</DockTab>
          <DockTab $w={67}>Archive Browser</DockTab>
        </Tabs>
        <BlockDetails />
      </Left>
      <Viewport><SceneDrawing /></Viewport>
    </Work>
    <StatusBar>
      D:/Games/Skyrim/Data/Meshes/Gstring deamond/gstring diamond1.nif
      <Svg w={9}><path d="M1 11V5h10v6z" fill="#f2c58c" /><path d="M0 6V2h5M4 0l3 2-3 2" stroke="#54b9d1" strokeWidth="1.7" /></Svg>
      <ResizeGrip />
    </StatusBar>
  </Win>
);

const Taskbar = () => (
  <TaskBar>
    <StartButton>
      <Svg w={18} box="0 0 18 18"><path d="M0 2.8 7.5 1.6v6.8H0zM8.5 1.4 18 0v8.4H8.5zM0 9.4h7.5v7L0 15.2zM8.5 9.4H18v8.4l-9.5-1.3z" fill="#fff" /></Svg>
    </StartButton>
    <TaskItem $open><ExplorerIcon /></TaskItem>
    <TaskItem><FigureIcon edge="#dba13f" /></TaskItem>
    <TaskItem><FigureIcon edge="#fff" /></TaskItem>
    <TaskItem $open><ChromeIcon /></TaskItem>
    <TaskItem><CompassIcon /></TaskItem>
    <TaskItem><PsTile>Ps</PsTile></TaskItem>
    <TaskItem $open><SwordIcon /></TaskItem>
    <TaskItem $open><BadgeIcon /></TaskItem>
    <TaskItem $current><AppIcon size={23} /></TaskItem>
    <Tray>
      <Svg w={12}><path d="M0 0h12v12H0z" fill="#243022" /><path d="M1 6c3-4 7-4 9 0-2 3-6 3-7 0 2-2 4-1 5 0M6 3h5v6H6" stroke="#78b72c" /></Svg>
      <Svg w={12}><path d="M10 3A4.5 4.5 0 1 0 10 9" stroke="#ca3028" strokeWidth="3" /><path d="M5 11 10 6M8 1l3 1" stroke="#e9eef2" strokeWidth="2" /><path d="M7 10h4" stroke="#397fbe" strokeWidth="2" /></Svg>
      <Svg w={12}><path d="M1 1.5 4.5 5 1 10M11 1.5 7.5 5 11 10M1 6h4M7 6h4" stroke="#343434" strokeWidth="1.6" /><path d="m6 3 2 3-2 3-2-3z" fill="#d9a62d" /></Svg>
      <Svg w={12}><path d="M2 1v11" stroke="#fff" strokeWidth="1.3" /><path d="M2 1h4l1 1h4v5H7L6 6H2z" fill="#f4f1ea" stroke="#665a3e" strokeWidth=".5" /></Svg>
      <Svg w={12}><path d="m1 1 8 3 3 7-5-1-5 2 1-5z" fill="#191919" /><path d="m1 10 4-5 3 1-3 3" stroke="#eee" /><circle cx="8" cy="8" r="1.4" fill="#ddd" /></Svg>
      <Svg w={12}><path d="M5 2.5h6v5H5zM8 8v2.5M5.5 10.5h5M1.5 1.5v3h2v-3M2.5 5v6" stroke="#5d5136" strokeWidth="2" /><path d="M5 2.5h6v5H5zM8 8v2.5M5.5 10.5h5M1.5 1.5v3h2v-3M2.5 5v6" stroke="#f3eee2" strokeWidth="1.1" /></Svg>
      <Svg w={12}><path d="M1 4h2l4-3v10L3 8H1z" fill="#fff" /><path d="M9 4c1 1 1 3 0 4" stroke="#fff" /></Svg>
      <Lang>РУС</Lang>
      <Clock>11:15<br />03.11.2018</Clock>
    </Tray>
  </TaskBar>
);

const App = () => (
  <>
    <GlobalStyle />
    <Screen>
      <Browser />
      <Taskbar />
      <NifWindow />
    </Screen>
  </>
);

export default App;
